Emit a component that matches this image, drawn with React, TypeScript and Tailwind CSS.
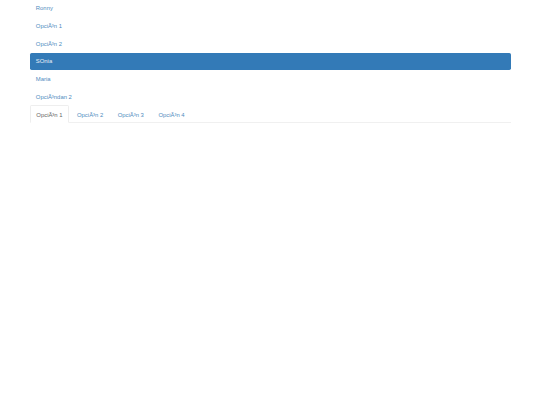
const pills = [
  { label: 'Ronny' },
  { label: 'OpciÃ³n 1' },
  { label: 'OpciÃ³n 2' },
  { label: 'SOnia', active: true },
  { label: 'Maria' },
  { label: 'OpciÃ³ndan 2' },
];

const tabs = ['OpciÃ³n 1', 'OpciÃ³n 2', 'OpciÃ³n 3', 'OpciÃ³n 4'];

export default function App() {
  return (
    <div className="min-h-[405px] bg-white font-['Liberation_Sans',Arial,sans-serif] text-[5.9px] leading-[8.44px]">
      <div className="mx-[29.5px]">
        <ul className="flex flex-col gap-[0.84px]">
          {pills.map((pill) => (
            <li key={pill.label}>
              <a
                href="#"
                className={
                  pill.active
                    ? 'block rounded-[1.7px] bg-[#337ab7] px-[6.33px] py-[4.22px] text-[#e8f0f7]'
                    : 'block rounded-[1.7px] px-[6.33px] py-[4.22px] text-[#4f8cc0]'
                }
              >
                {pill.label}
              </a>
            </li>
          ))}
        </ul>
        <ul className="flex h-[18px] border-b border-[#f0f0f0]">
          {tabs.map((tab, i) => (
            <li key={tab} className="mr-[0.84px] h-[18px]">
              <a
                href="#"
                className={
                  i === 0
                    ? 'block h-[18px] rounded-t-[1.7px] border border-[#eeeeee] border-b-white bg-white px-[5.83px] pt-[4.3px] text-[#666]'
                    : 'block h-[18px] rounded-t-[1.7px] border border-transparent px-[5.83px] pt-[4.3px] text-[#4f8cc0]'
                }
              >
                {tab}
              </a>
            </li>
          ))}
        </ul>
      </div>
    </div>
  );
}
